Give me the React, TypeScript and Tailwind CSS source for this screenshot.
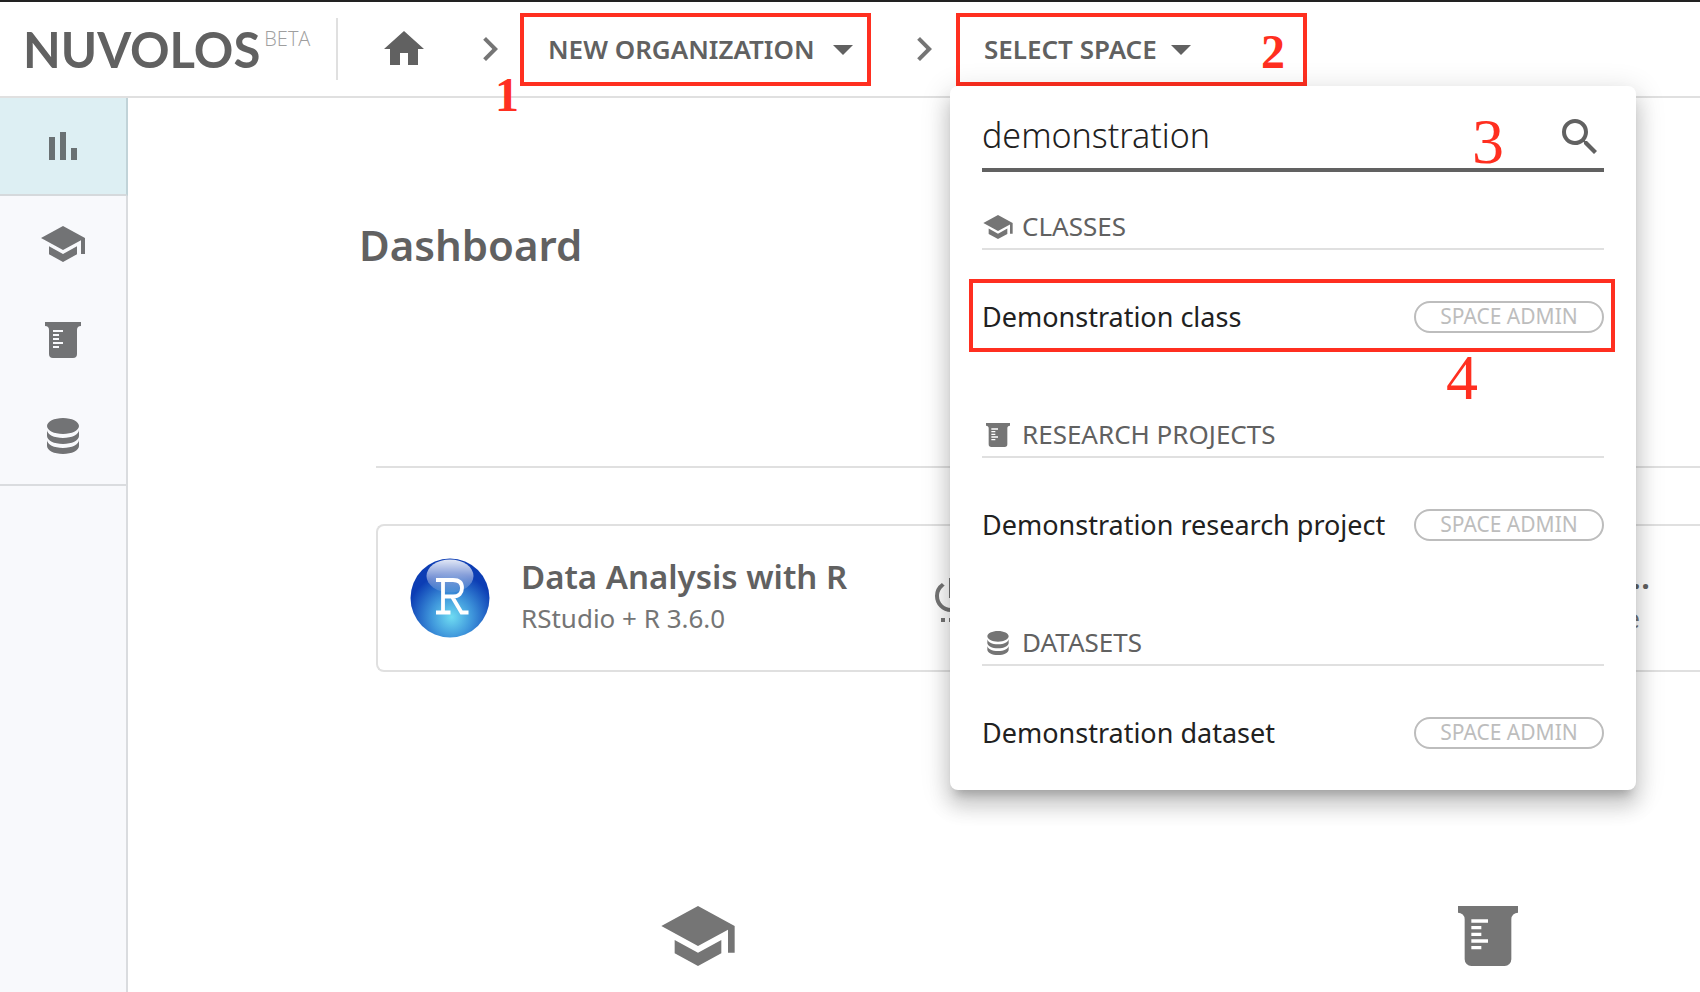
import React, { useState } from "react";

const PATHS = {
  home: "M10 20V14H14V20H19V12H22L12 3L2 12H5V20Z",
  chevron: "M8.59 16.58L13.17 12L8.59 7.41L10 6L16 12L10 18Z",
  caret: "M7 10L12 15L17 10Z",
  search:
    "M9.5 3A6.5 6.5 0 0 1 16 9.5C16 11.11 15.41 12.59 14.44 13.73L14.71 14H15.5L20.5 19L19 20.5L14 15.5V14.71L13.73 14.44C12.59 15.41 11.11 16 9.5 16A6.5 6.5 0 0 1 9.5 3M9.5 5C7 5 5 7 5 9.5S7 14 9.5 14 14 12 14 9.5 12 5 9.5 5Z",
  bars: "M5 7.5H8V19H5ZM10.5 5H13.5V19H10.5ZM16 13H19V19H16Z",
  school:
    "M12 3L1 9L12 15L21 10.09V17H23V9M5 13.18V17.18L12 21L19 17.18V13.18L12 17L5 13.18Z",
  beaker:
    "M3 3H21V5A2 2 0 0 0 19 7V19A2 2 0 0 1 17 21H7A2 2 0 0 1 5 19V7A2 2 0 0 0 3 5V3M7 7V8H12V7H7M7 9V10H10V9H7M7 11V12H10V11H7M7 13V14H12V13H7M7 15V16H10V15H7Z",
  database:
    "M12 3C7.58 3 4 4.79 4 7S7.58 11 12 11 20 9.21 20 7 16.42 3 12 3M4 9V12C4 14.21 7.58 16 12 16S20 14.21 20 12V9C20 11.21 16.42 13 12 13S4 11.21 4 9M4 14V17C4 19.21 7.58 21 12 21S20 19.21 20 17V14C20 16.21 16.42 18 12 18S4 16.21 4 14Z",
  power:
    "M7 24h2v-2H7v2zm4 0h2v-2h-2v2zm2-22h-2v10h2V2zm3.56 2.44l-1.45 1.45A5.97 5.97 0 0 1 18 11c0 3.31-2.69 6-6 6s-6-2.69-6-6c0-2.17 1.16-4.06 2.88-5.12L7.44 4.44A7.96 7.96 0 0 0 4 11c0 4.42 3.58 8 8 8s8-3.58 8-8c0-2.72-1.36-5.12-3.44-6.56zM15 24h2v-2h-2v2z",
};

type IconName = keyof typeof PATHS;

function Icon({ name, className }: { name: IconName; className: string }) {
  return (
    <svg viewBox="0 0 24 24" fill="currentColor" fillRule="evenodd" aria-hidden="true" className={`shrink-0 ${className}`}>
      <path d={PATHS[name]} />
    </svg>
  );
}

function RStudioLogo() {
  return (
    <svg viewBox="0 0 80 80" className="size-20 shrink-0" aria-hidden="true">
      <defs>
        <radialGradient id="ball" cx="0.52" cy="0.74" r="0.56">
          <stop offset="0" stopColor="#6fdcf2" />
          <stop offset="0.45" stopColor="#4098dc" />
          <stop offset="1" stopColor="#0c3db4" />
        </radialGradient>
        <linearGradient id="gloss" x1="0" y1="0" x2="0" y2="1">
          <stop offset="0" stopColor="#fff" stopOpacity="0.88" />
          <stop offset="1" stopColor="#fff" stopOpacity="0.08" />
        </linearGradient>
      </defs>
      <circle cx="40" cy="40" r="39.5" fill="url(#ball)" />
      <ellipse cx="40" cy="18" rx="23.5" ry="16.5" fill="url(#gloss)" />
      <g fill="none" stroke="#fff" strokeWidth="3.8">
        <path d="M26 22H43C50 22 52 26 52 30C52 35 49 38.500 43 38.500H33M33 22V54.500M26 54.500H40.500M42 38.500L51.500 54.500H58.500" />
      </g>
    </svg>
  );
}

const NAV: { icon: IconName; label: string; active?: boolean }[] = [
  { icon: "bars", label: "Dashboard", active: true },
  { icon: "school", label: "Classes" },
  { icon: "beaker", label: "Research projects" },
  { icon: "database", label: "Datasets" },
];

const GROUPS: { icon: IconName; title: string; item: string; marked?: boolean }[] = [
  { icon: "school", title: "CLASSES", item: "Demonstration class", marked: true },
  { icon: "beaker", title: "RESEARCH PROJECTS", item: "Demonstration research project" },
  { icon: "database", title: "DATASETS", item: "Demonstration dataset" },
];

function Step({ n, className }: { n: number; className: string }) {
  return (
    <span className={`pointer-events-none font-['Liberation_Serif',serif] text-[#ff2f20] ${className}`}>{n}</span>
  );
}

function SpaceMenu() {
  const [query, setQuery] = useState("demonstration");
  return (
    <div className="absolute -left-2.5 top-[69px] z-10 w-[686px] rounded-lg bg-white px-8 pb-[18px] shadow-[0_10px_10px_-6px_rgba(0,0,0,0.2),0_16px_20px_2px_rgba(0,0,0,0.14),0_6px_28px_4px_rgba(0,0,0,0.12)]">
      <div className="relative flex h-[86px] items-center border-b-4 border-[#616161] pt-5">
        <input
          aria-label="Search spaces"
          value={query}
          onChange={(e) => setQuery(e.target.value)}
          className="min-w-0 flex-1 bg-transparent pb-1 text-[34px] font-light leading-10 text-[#212121] outline-none"
        />
        <button aria-label="Search" className="text-[#616161]">
          <Icon name="search" className="size-12" />
        </button>
        <Step n={3} className="absolute right-[100px] top-6 text-[64px] leading-[64px]" />
      </div>
      {GROUPS.map((g) => (
        <section key={g.title} className="h-52 pt-9 last:h-[184px]">
          <h2 className="flex h-[42px] items-center gap-2 border-b-2 border-[#e0e0e0] pb-0.5 text-[26px] text-[#616161]">
            <Icon name={g.icon} className="size-8 text-[#757575]" />
            {g.title}
          </h2>
          <div className="relative -ml-[13px] -mr-[11px] mt-[29px]">
            <button
              className={`flex h-[73px] w-full items-center justify-between border-4 pl-[9px] pr-[7px] pt-1 ${g.marked ? "border-[#ff2f20]" : "border-transparent"}`}
            >
              <span className="text-[27px] leading-9 text-[#212121]">{g.item}</span>
              <span className="flex h-8 w-[190px] items-center justify-center rounded-full border-2 border-[#bdbdbd] text-[21px] text-[#bdbdbd]">
                SPACE ADMIN
              </span>
            </button>
            {g.marked && <Step n={4} className="absolute right-[137px] top-[67px] text-[64px] leading-[64px]" />}
          </div>
        </section>
      ))}
    </div>
  );
}

export default function App() {
  return (
    <div className="flex min-h-screen flex-col overflow-hidden bg-white font-['Noto_Sans',sans-serif] text-[#616161]">
      <header className="relative flex h-[98px] items-center border-y-2 border-t-[#222] border-b-[#e0e0e0] pl-[23px]">
        <a href="#" className="flex w-[313px] shrink-0 items-start gap-1">
          <span className="font-['Lato',sans-serif] text-[49px] font-bold leading-[48px]">NUVOLOS</span>
          <span className="font-['Open_Sans',sans-serif] text-xl font-light text-[#9e9e9e]">BETA</span>
        </a>
        <div className="h-[62px] w-0.5 shrink-0 bg-[#e0e0e0]" />
        <a href="#" aria-label="Home" className="ml-[42px]">
          <Icon name="home" className="size-12" />
        </a>
        <div className="relative ml-[38px] mr-1.5">
          <Icon name="chevron" className="size-12 text-[#757575]" />
          <Step n={1} className="absolute left-[29px] top-[46px] z-10 text-5xl font-bold" />
        </div>
        <button className="flex h-[73px] w-[351px] shrink-0 items-center justify-between border-4 border-[#ff2f20] pl-6 text-[26px] font-semibold">
          NEW ORGANIZATION
          <Icon name="caret" className="size-12" />
        </button>
        <Icon name="chevron" className="ml-[29px] mr-2 size-12 text-[#757575]" />
        <div className="relative flex h-[73px] w-[351px] shrink-0 items-center justify-between border-4 border-[#ff2f20] pl-6 pr-[18px]">
          <button className="flex items-center text-[26px] font-semibold">
            SELECT SPACE
            <Icon name="caret" className="size-12" />
          </button>
          <Step n={2} className="pt-1.5 text-5xl font-bold" />
          <SpaceMenu />
        </div>
      </header>

      <div className="flex flex-1">
        <nav className="w-32 shrink-0 border-r-2 border-[#dadcdf] bg-[#f8f9fc]">
          {NAV.map((n) => (
            <a
              key={n.label}
              href="#"
              aria-label={n.label}
              className={`flex items-center justify-center ${
                n.active
                  ? "-mr-0.5 h-[98px] border-b-2 border-r-2 border-b-[#d5d9dc] border-r-[#c1d3d8] bg-[#ddeff3] text-[#6a7173]"
                  : "h-24 text-[#727375]"
              }`}
            >
              <Icon name={n.icon} className="size-12" />
            </a>
          ))}
          <div className="-mr-0.5 h-0.5 bg-[#dadcdf]" />
        </nav>

        <main className="min-w-0 flex-1">
          <h1 className="pl-[231px] pt-[118px] text-[42px] font-semibold leading-[58px]">Dashboard</h1>
          <div className="ml-[248px] mt-48 h-0.5 bg-[#e0e0e0]" />
          <article className="ml-[248px] mt-14 flex h-[148px] items-center rounded-l-lg border-2 border-r-0 border-[#e0e0e0] pl-8">
            <RStudioLogo />
            <div className="-mt-0.5 ml-[31px] w-[406px] shrink-0">
              <h2 className="text-[33px] font-semibold leading-[42px]">Data Analysis with R</h2>
              <p className="text-[26px] leading-10 text-[#757575]">RStudio + R 3.6.0</p>
            </div>
            <button aria-label="Stop" className="text-[#757575]">
              <Icon name="power" className="size-12" />
            </button>
            <div className="-mt-0.5 ml-auto pr-[50px]">
              <p className="text-[33px] font-semibold leading-[42px]">...</p>
              <p className="pr-2.5 text-right text-[26px] leading-10 text-[#757575]">e</p>
            </div>
          </article>
          <div className="mt-56 flex justify-between pl-[530px] pr-[172px] text-[#757575]">
            <Icon name="school" className="size-20" />
            <Icon name="beaker" className="size-20" />
          </div>
        </main>
      </div>
    </div>
  );
}
